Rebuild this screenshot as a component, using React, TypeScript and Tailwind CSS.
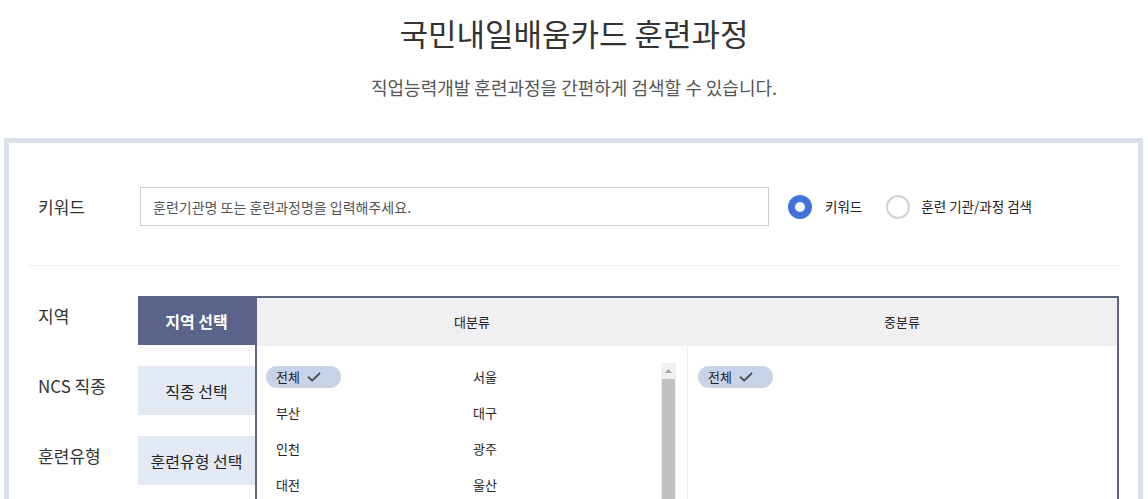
import { Fragment } from 'react';

const font = { fontFamily: '"Noto Sans CJK KR", "Noto Sans", sans-serif' };

const regions = ['전체', '서울', '부산', '대구', '인천', '광주', '대전', '울산', '세종', '경기', '강원', '충북'];

const CheckMark = () => (
  <svg width="14" height="14" viewBox="0 0 14 14" fill="none">
    <path d="M1.5 7.2L5.2 10.6L12.5 3.4" stroke="#444" strokeWidth="1.8" strokeLinecap="round" strokeLinejoin="round" />
  </svg>
);

const Pill = ({ label }: { label: string }) => (
  <div className="inline-flex h-[22px] items-center gap-[7px] rounded-full bg-[#c9d3e8] pl-[10px] pr-[20px] text-[13px] text-[#222]">
    <span>{label}</span>
    <CheckMark />
  </div>
);

const tabs = [
  { label: '지역', tab: '지역 선택', active: true },
  { label: 'NCS 직종', tab: '직종 선택', active: false },
  { label: '훈련유형', tab: '훈련유형 선택', active: false },
];

const App = () => {
  return (
    <div className="min-h-screen bg-white text-[#333]" style={font}>
      <div className="flex flex-col items-center pt-[14px]">
        <h1 className="text-[31px] leading-[38px] font-normal text-[#333]">국민내일배움카드 훈련과정</h1>
        <p className="mt-[23px] text-[18px] leading-[24px] text-[#555]">
          직업능력개발 훈련과정을 간편하게 검색할 수 있습니다.
        </p>
      </div>

      <div className="ml-[4px] mt-[39px] w-[1139px] border-[5px] border-[#dbe1eb] px-[19px] pb-[40px]">
        {/* keyword row */}
        <div className="flex items-center border-b border-[#eeeeee] pt-[44px] pb-[39px]">
          <div className="w-[112px] pl-[10px] text-[17px] text-[#333]">키워드</div>
          <input
            className="h-[39px] w-[629px] border border-[#cccccc] px-[12px] text-[14px] text-[#333] outline-none placeholder:text-[#555]"
            placeholder="훈련기관명 또는 훈련과정명을 입력해주세요."
          />
          <div className="ml-[19px] flex items-center">
            <span className="h-[24px] w-[24px] rounded-full border-[7px] border-[#4273db] bg-white" />
            <span className="ml-[13px] text-[13.5px] text-[#222]">키워드</span>
          </div>
          <div className="ml-[24px] flex items-center">
            <span className="h-[24px] w-[24px] rounded-full border-2 border-[#d2d2d2] bg-white" />
            <span className="ml-[11px] text-[13.5px] text-[#222]">훈련 기관/과정 검색</span>
          </div>
        </div>

        {/* category selector */}
        <div className="flex pt-[30px]">
          <div className="flex flex-col gap-[21px]">
            {tabs.map((t) => (
              <div key={t.tab} className="flex">
                <div className="w-[110px] pl-[10px] pt-[8px] text-[17px] leading-[24px] text-[#333]">{t.label}</div>
                <div
                  className={
                    t.active
                      ? 'flex h-[49px] w-[117px] items-center justify-center bg-[#5a6389] text-[16px] font-bold text-white'
                      : 'flex h-[49px] w-[117px] items-center justify-center bg-[#e3eaf5] text-[16px] text-[#222]'
                  }
                >
                  {t.tab}
                </div>
              </div>
            ))}
          </div>

          <div className="flex-1 border-2 border-[#60657f] bg-white">
            <div className="grid h-[48px] grid-cols-2 bg-[#f0f0f3] text-[13px] text-[#222]">
              <div className="flex items-center justify-center">대분류</div>
              <div className="flex items-center justify-center">중분류</div>
            </div>
            <div className="grid h-[260px] grid-cols-2">
              <div className="flex overflow-hidden">
                <div className="grid flex-1 grid-cols-[197px_1fr] content-start pl-[9px] pt-[13px] text-[13px] text-[#222]">
                  {regions.map((r, i) => (
                    <Fragment key={r}>
                      <div className="flex h-[36px] items-center">
                        {i === 0 ? <Pill label={r} /> : <span className="pl-[10px]">{r}</span>}
                      </div>
                    </Fragment>
                  ))}
                </div>
                <div className="mr-[11px] mt-[17px] flex w-[15px] flex-col bg-[#f1f1f1]">
                  <div className="flex h-[16px] items-center justify-center">
                    <svg width="7" height="4" viewBox="0 0 7 4">
                      <path d="M0 4L3.5 0L7 4Z" fill="#a3a3a3" />
                    </svg>
                  </div>
                  <div className="mx-[1px] flex-1 bg-[#c1c1c1]" />
                </div>
              </div>
              <div className="border-l border-[#eeeeee] pl-[10px] pt-[17px]">
                <Pill label="전체" />
              </div>
            </div>
          </div>
        </div>
      </div>
    </div>
  );
};

export default App;
